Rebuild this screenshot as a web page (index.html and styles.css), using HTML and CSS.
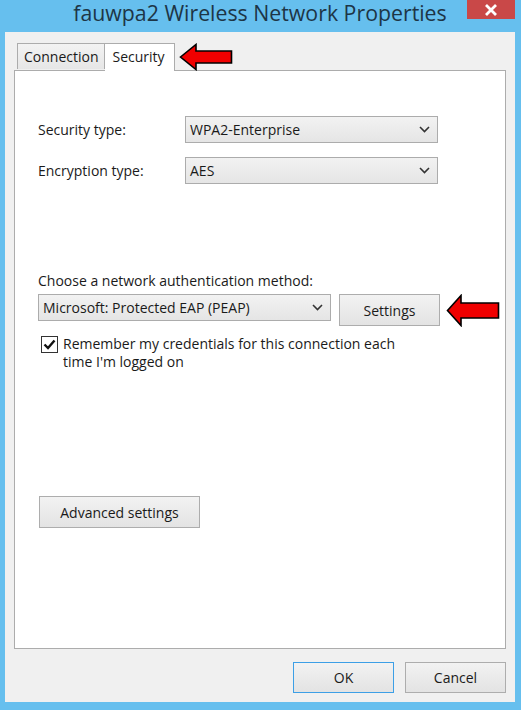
FILE: index.html
```html
<!DOCTYPE html>
<html>
<head>
<meta charset="utf-8">
<link rel="stylesheet" href="styles.css">
</head>
<body>
<div class="window">
  <div class="titlebar">
    <div class="title">fauwpa2 Wireless Network Properties</div>
    <div class="close">
      <svg width="14" height="12" viewBox="0 0 14 12"><path d="M2 1 L12 11 M12 1 L2 11" stroke="#fff" stroke-width="2.8" fill="none"/></svg>
    </div>
  </div>
  <div class="client">
    <div class="tabs">
      <div class="tab">Connection</div>
      <div class="tab active">Security</div>
      <svg class="arrow arrow-tab" width="54" height="28" viewBox="0 0 54 28"><polygon points="1.5,14 17,1.5 17,8 52.5,8 52.5,20 17,20 17,26.5" fill="#f00000" stroke="#000" stroke-width="1.6" stroke-linejoin="miter"/></svg>
    </div>
    <div class="panel">
      <div class="row">
        <span class="label">Security type:</span>
        <div class="select wide"><span>WPA2-Enterprise</span><span class="chev"><svg width="11" height="7" viewBox="0 0 11 7"><path d="M1 1 L5.5 5.5 L10 1" stroke="#333" stroke-width="1.6" fill="none"/></svg></span></div>
      </div>
      <div class="row">
        <span class="label">Encryption type:</span>
        <div class="select wide"><span>AES</span><span class="chev"><svg width="11" height="7" viewBox="0 0 11 7"><path d="M1 1 L5.5 5.5 L10 1" stroke="#333" stroke-width="1.6" fill="none"/></svg></span></div>
      </div>
      <div class="auth">
        <div class="caption">Choose a network authentication method:</div>
        <div class="auth-row">
          <div class="select method"><span>Microsoft: Protected EAP (PEAP)</span><span class="chev"><svg width="11" height="7" viewBox="0 0 11 7"><path d="M1 1 L5.5 5.5 L10 1" stroke="#333" stroke-width="1.6" fill="none"/></svg></span></div>
          <div class="btn settings">Settings</div>
          <svg class="arrow" width="54" height="33" viewBox="0 0 54 33"><polygon points="1.5,16.5 15,1.5 15,9 52.5,9 52.5,24 15,24 15,31.5" fill="#f00000" stroke="#000" stroke-width="1.6"/></svg>
        </div>
        <div class="check-row">
          <span class="checkbox"><svg width="13" height="11" viewBox="0 0 13 11"><path d="M1.5 5.5 L5 9 L11.5 1.5" stroke="#111" stroke-width="2.4" fill="none"/></svg></span>
          <span class="check-text">Remember my credentials for this connection each time I'm logged on</span>
        </div>
      </div>
      <div class="btn advanced">Advanced settings</div>
    </div>
    <div class="footer">
      <div class="btn ok">OK</div>
      <div class="btn">Cancel</div>
    </div>
  </div>
</div>
</body>
</html>
```

FILE: styles.css
```css
* { box-sizing: border-box; }
html, body { margin: 0; padding: 0; }
body {
  font-family: "Open Sans", "Noto Sans", "Liberation Sans", sans-serif;
  font-size: 14px;
  color: #1a1a1a;
}
.window {
  width: 521px;
  height: 710px;
  background: #66bfee;
  display: flex;
  flex-direction: column;
  padding: 0 6px 8px 5px;
}
.titlebar {
  height: 32px;
  display: flex;
  position: relative;
  justify-content: center;
}
.title {
  font-size: 21.3px;
  color: #1d3546;
  line-height: 28px;
  margin-top: -1px;
}
.close {
  position: absolute;
  right: 0;
  top: 0;
  width: 48px;
  height: 19px;
  background: #c94848;
  display: flex;
  align-items: center;
  justify-content: center;
}
.client {
  flex: 1;
  background: #f0f0f0;
  padding: 10px 9px 9px 9px;
  display: flex;
  flex-direction: column;
}
.tabs {
  display: flex;
  align-items: flex-end;
  padding-left: 3px;
  height: 28px;
  position: relative;
  z-index: 1;
}
.tab {
  height: 26px;
  padding: 0 5px 0 6px;
  border: 1px solid #acacac;
  border-bottom: none;
  background: linear-gradient(#f3f3f3, #e6e6e6);
  line-height: 26px;
  font-size: 14px;
  margin-bottom: 1px;
}
.tab.active {
  height: 28px;
  margin-bottom: -1px;
  background: #fff;
  border-left: none;
  padding: 0 9px 0 8px;
  line-height: 25px;
}
.arrow-tab {
  align-self: center;
  margin-left: 4px;
  margin-top: 2px;
}
.panel {
  height: 579px;
  background: #fff;
  border: 1px solid #acacac;
  padding: 45px 0 0 23px;
  display: flex;
  flex-direction: column;
}
.row {
  display: flex;
  align-items: center;
  margin-bottom: 14px;
}
.label {
  width: 147px;
}
.select {
  height: 27px;
  border: 1px solid #acacac;
  background: linear-gradient(#f2f2f2, #e5e5e5);
  display: flex;
  align-items: center;
  justify-content: space-between;
  padding: 0 7px 0 4px;
}
.select.wide { width: 253px; }
.select.method { width: 293px; }
.chev { display: flex; align-items: center; }
.auth {
  margin-top: 73px;
}
.caption {
  line-height: 20px;
  margin-bottom: 3px;
}
.auth-row {
  display: flex;
  align-items: flex-start;
}
.btn {
  border: 1px solid #adadad;
  background: linear-gradient(#f2f2f2, #e3e3e3);
  display: flex;
  align-items: center;
  justify-content: center;
  height: 32px;
}
.settings {
  width: 101px;
  margin-left: 8px;
}
.auth-row .arrow { margin-left: 6px; }
.check-row {
  display: flex;
  align-items: flex-start;
  margin-top: 8px;
  padding-left: 3px;
}
.checkbox {
  width: 17px;
  height: 17px;
  border: 1px solid #333;
  background: #fff;
  display: flex;
  align-items: center;
  justify-content: center;
  flex: none;
  margin-top: 1px;
}
.check-text {
  width: 360px;
  margin-left: 5px;
  line-height: 18px;
}
.advanced {
  width: 161px;
  margin-top: 125px;
  margin-left: 1px;
}
.footer {
  display: flex;
  justify-content: flex-end;
  gap: 11px;
  margin-top: 13px;
}
.footer .btn {
  width: 101px;
  height: 31px;
}
.footer .ok {
  border-color: #3c9fe6;
}
```
